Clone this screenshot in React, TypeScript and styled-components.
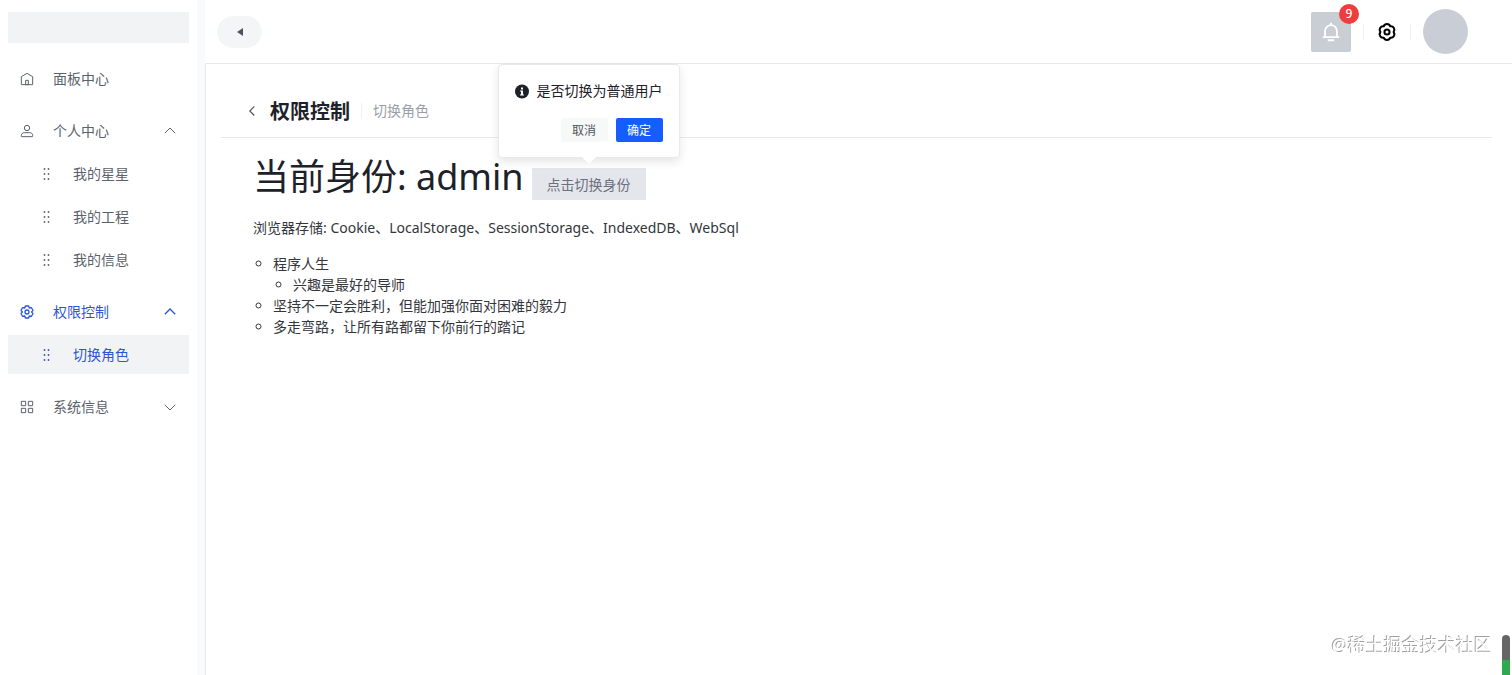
import React from "react";
import styled, { createGlobalStyle, css } from "styled-components";

const Global = createGlobalStyle`
  *, *::before, *::after { box-sizing: border-box; }
  body {
    margin: 0;
    background: #fff;
    color: #1d2129;
    font-family: "Noto Sans", "Noto Sans CJK SC", sans-serif;
    font-size: 14px;
  }
  button { font: inherit; border: 0; padding: 0; cursor: pointer; }
`;

const Layout = styled.div`
  display: grid;
  grid-template-columns: 205px minmax(0, 1fr);
  min-height: 100vh;
`;

const Sidebar = styled.aside`
  padding: 12px 8px;
  border-right: 8px solid #f9fafb;
`;

const Logo = styled.div`
  height: 31px;
  margin-bottom: 16px;
  background: #f2f3f5;
`;

const Menu = styled.nav`
  display: flex;
  flex-direction: column;
  gap: 13px;
`;

const Group = styled.div`
  display: flex;
  flex-direction: column;
  gap: 4px;
`;

const GroupHead = styled.button<{ $active?: boolean }>`
  display: flex;
  align-items: center;
  gap: 18px;
  height: 39px;
  padding: 0 11px;
  background: none;
  color: ${(p) => (p.$active ? "#2f55d4" : "#5c626c")};
  text-align: left;
`;

const Label = styled.span`
  flex: 1;
  padding-bottom: 2px;
`;

const SubLink = styled.a<{ $active?: boolean }>`
  display: flex;
  align-items: center;
  gap: 20px;
  height: 39px;
  padding: 0 12px 0 32px;
  color: #5c626c;
  text-decoration: none;
  ${(p) =>
    p.$active &&
    css`
      background: #f2f3f5;
      color: #2f55d4;
    `}
`;

const Column = styled.div`
  display: flex;
  flex-direction: column;
  min-width: 0;
`;

const TopBar = styled.header`
  display: flex;
  align-items: center;
  justify-content: space-between;
  height: 63px;
  padding: 0 44px 0 12px;
`;

const Collapse = styled.button`
  display: flex;
  align-items: center;
  justify-content: center;
  width: 45px;
  height: 32px;
  border-radius: 16px;
  background: #f4f5f6;
  color: #4e5560;
`;

const Tools = styled.div`
  display: flex;
  align-items: center;
  gap: 12px;
`;

const Bell = styled.button`
  position: relative;
  display: flex;
  align-items: center;
  justify-content: center;
  width: 40px;
  height: 40px;
  border-radius: 2px;
  background: #c9cdd4;
  color: #fff;
`;

const Count = styled.span`
  position: absolute;
  top: -8px;
  right: -8px;
  width: 20px;
  height: 20px;
  border-radius: 10px;
  background: #f03c3c;
  font-size: 12px;
  font-weight: 500;
  line-height: 20px;
`;

const Divider = styled.span`
  width: 1px;
  height: 16px;
  background: #f0f1f3;
`;

const IconButton = styled.button`
  display: flex;
  background: none;
  color: #000;
`;

const Avatar = styled.div`
  width: 45px;
  height: 45px;
  border-radius: 50%;
  background: #c9cdd6;
`;

const Panel = styled.main`
  flex: 1;
  padding: 0 20px 0 15px;
  border-top: 1px solid #e8e9ec;
  border-left: 1px solid #e8e9ec;
`;

const PageHead = styled.div`
  display: flex;
  align-items: center;
  gap: 11px;
  height: 74px;
  padding: 20px 24px 0;
  border-bottom: 1px solid #e8e9ec;
`;

const Back = styled.button`
  display: flex;
  background: none;
  color: #4e5560;
`;

const Title = styled.h1`
  margin: 0;
  padding-top: 2px;
  font-size: 20px;
  line-height: 28px;
  font-weight: 600;
`;

const Subtitle = styled.span`
  padding-bottom: 2px;
  color: #9aa0a9;
`;

const Content = styled.div`
  padding: 15px 32px;
`;

const Identity = styled.div`
  display: flex;
  align-items: baseline;
  gap: 8px;
`;

const Heading = styled.h2`
  margin: 0;
  font-size: 36px;
  line-height: 48px;
  font-weight: 400;
`;

const Anchor = styled.div`
  position: relative;
`;

const SwitchButton = styled.button`
  height: 32px;
  padding: 0 15px;
  background: #e5e6eb;
  color: #6b7080;
`;

const Popover = styled.div`
  position: absolute;
  bottom: calc(100% + 10px);
  left: 50%;
  display: flex;
  flex-direction: column;
  gap: 17px;
  width: 182px;
  padding: 16px 16px 15px;
  transform: translateX(-50%);
  border: 1px solid #e8e9ec;
  border-radius: 4px;
  background: #fff;
  box-shadow: 0 4px 10px rgba(0, 0, 0, 0.1);
  &::after {
    content: "";
    position: absolute;
    bottom: -5px;
    left: calc(50% - 5px);
    width: 10px;
    height: 10px;
    transform: rotate(45deg);
    background: #fff;
  }
`;

const Question = styled.div`
  display: flex;
  align-items: center;
  gap: 8px;
  line-height: 20px;
  white-space: nowrap;
`;

const Actions = styled.div`
  display: flex;
  justify-content: flex-end;
  gap: 8px;
`;

const SmallButton = styled.button<{ $primary?: boolean }>`
  width: 47px;
  height: 24px;
  border-radius: 2px;
  background: ${(p) => (p.$primary ? "#165dff" : "#f7f8f8")};
  color: ${(p) => (p.$primary ? "#fff" : "#4e5560")};
  font-size: 12px;
`;

const Storage = styled.p`
  margin: 16px 0 14px;
  color: #33363c;
  line-height: 22px;
`;

const List = styled.ul`
  margin: 0;
  padding-left: 20px;
  list-style: circle;
  color: #33363c;
  line-height: 21px;
`;

const Watermark = styled.div`
  position: fixed;
  right: 20px;
  bottom: 18px;
  color: #fff;
  font-size: 18px;
  line-height: 24px;
  text-shadow: -1px -1px 0 #a0a0a0;
`;

const ScrollMark = styled.div`
  position: fixed;
  right: 2px;
  bottom: 0;
  width: 8px;
  height: 40px;
  border-radius: 4px 4px 0 0;
  background: linear-gradient(#666 25px, #2fa84f 25px);
`;

const icons = {
  home: "M7 17 24 7l17 10v24H7V17ZM20 28h8v13h-8V28Z",
  user: "M7 37c0-4.97 4.03-8 9-8h16c4.97 0 9 3.03 9 8v3a1 1 0 0 1-1 1H8a1 1 0 0 1-1-1v-3ZM32 15a8 8 0 1 1-16 0 8 8 0 0 1 16 0Z",
  settings:
    "M18.797 6.732A1 1 0 0 1 19.76 6h8.48a1 1 0 0 1 .964.732l1.285 4.628a1 1 0 0 0 1.213.7l4.651-1.2a1 1 0 0 1 1.116.468l4.24 7.344a1 1 0 0 1-.153 1.2L38.193 23.3a1 1 0 0 0 0 1.402l3.364 3.427a1 1 0 0 1 .153 1.2l-4.24 7.344a1 1 0 0 1-1.116.468l-4.65-1.2a1 1 0 0 0-1.214.7l-1.285 4.628a1 1 0 0 1-.964.732h-8.48a1 1 0 0 1-.963-.732L17.51 36.64a1 1 0 0 0-1.213-.7l-4.65 1.2a1 1 0 0 1-1.116-.468l-4.24-7.344a1 1 0 0 1 .153-1.2L9.809 24.7a1 1 0 0 0 0-1.402l-3.364-3.427a1 1 0 0 1-.153-1.2l4.24-7.344a1 1 0 0 1 1.116-.468l4.65 1.2a1 1 0 0 0 1.213-.7l1.286-4.628ZM30 24a6 6 0 1 1-12 0 6 6 0 0 1 12 0Z",
  apps: "M7 7h13v13H7V7ZM28 7h13v13H28V7ZM7 28h13v13H7V28ZM28 28h13v13H28V28Z",
  up: "M39.6 30.557 24.043 15 8.487 30.557",
  down: "M39.6 17.443 24.043 33 8.487 17.443",
  left: "M32 8.4 16.444 23.956 32 39.513",
  bell: "M24 9c7.18 0 13 5.82 13 13v13H11V22c0-7.18 5.82-13 13-13Zm0 0V4M6 35h36m-25 7h14",
};

function Icon({ name, size = 16, weight = 3 }: { name: keyof typeof icons; size?: number; weight?: number }) {
  return (
    <svg width={size} height={size} viewBox="0 0 48 48" fill="none" stroke="currentColor" strokeWidth={weight} aria-hidden>
      <path d={icons[name]} />
    </svg>
  );
}

function Dots() {
  return (
    <svg width="13" height="14" viewBox="0 0 13 14" fill="currentColor" aria-hidden>
      {[2, 7, 12].map((y) => (
        <React.Fragment key={y}>
          <circle cx="4.5" cy={y} r="0.9" />
          <circle cx="8.5" cy={y} r="0.9" />
        </React.Fragment>
      ))}
    </svg>
  );
}

function Gear() {
  return (
    <svg width="22" height="22" viewBox="0 0 26 26" fill="none" stroke="currentColor" strokeWidth="2.4" strokeLinejoin="round" aria-hidden>
      <path d="M20.8 13A4.2 4.2 0 0 0 16.9 6.25A4.2 4.2 0 0 0 9.1 6.25A4.2 4.2 0 0 0 5.2 13A4.2 4.2 0 0 0 9.1 19.75A4.2 4.2 0 0 0 16.9 19.75A4.2 4.2 0 0 0 20.8 13Z" />
      <circle cx="13" cy="13" r="3" />
    </svg>
  );
}

type MenuGroup = {
  label: string;
  icon: keyof typeof icons;
  arrow?: "up" | "down";
  active?: boolean;
  items?: { label: string; active?: boolean }[];
};

const menu: MenuGroup[] = [
  { label: "面板中心", icon: "home" },
  { label: "个人中心", icon: "user", arrow: "up", items: [{ label: "我的星星" }, { label: "我的工程" }, { label: "我的信息" }] },
  { label: "权限控制", icon: "settings", arrow: "up", active: true, items: [{ label: "切换角色", active: true }] },
  { label: "系统信息", icon: "apps", arrow: "down" },
];

export default function App() {
  return (
    <>
      <Global />
      <Layout>
        <Sidebar>
          <Logo />
          <Menu>
            {menu.map((g) => (
              <Group key={g.label}>
                <GroupHead $active={g.active}>
                  <Icon name={g.icon} weight={g.active ? 4 : 3} />
                  <Label>{g.label}</Label>
                  {g.arrow && <Icon name={g.arrow} weight={g.active ? 4 : 3} />}
                </GroupHead>
                {g.items?.map((item) => (
                  <SubLink key={item.label} href="#" $active={item.active}>
                    <Dots />
                    <Label>{item.label}</Label>
                  </SubLink>
                ))}
              </Group>
            ))}
          </Menu>
        </Sidebar>
        <Column>
          <TopBar>
            <Collapse aria-label="收起菜单">
              <svg width="8" height="10" viewBox="0 0 8 10" fill="currentColor" aria-hidden>
                <path d="M1 5 7 1v8Z" />
              </svg>
            </Collapse>
            <Tools>
              <Bell aria-label="通知">
                <Icon name="bell" size={22} weight={4} />
                <Count>9</Count>
              </Bell>
              <Divider />
              <IconButton aria-label="设置">
                <Gear />
              </IconButton>
              <Divider />
              <Avatar />
            </Tools>
          </TopBar>
          <Panel>
            <PageHead>
              <Back aria-label="返回">
                <Icon name="left" size={14} weight={4} />
              </Back>
              <Title>权限控制</Title>
              <Divider />
              <Subtitle>切换角色</Subtitle>
            </PageHead>
            <Content>
              <Identity>
                <Heading>当前身份: admin</Heading>
                <Anchor>
                  <SwitchButton>点击切换身份</SwitchButton>
                  <Popover role="dialog" aria-label="是否切换为普通用户">
                    <Question>
                      <svg width="15" height="15" viewBox="0 0 14 14" aria-hidden>
                        <circle cx="7" cy="7" r="7" fill="#1d2129" />
                        <path d="M6 3h2v2H6ZM5 6h3v4h1v1H5v-1h1V7H5Z" fill="#fff" />
                      </svg>
                      是否切换为普通用户
                    </Question>
                    <Actions>
                      <SmallButton>取消</SmallButton>
                      <SmallButton $primary>确定</SmallButton>
                    </Actions>
                  </Popover>
                </Anchor>
              </Identity>
              <Storage>浏览器存储: Cookie、LocalStorage、SessionStorage、IndexedDB、WebSql</Storage>
              <List>
                <li>
                  程序人生
                  <List>
                    <li>兴趣是最好的导师</li>
                  </List>
                </li>
                <li>坚持不一定会胜利，但能加强你面对困难的毅力</li>
                <li>多走弯路，让所有路都留下你前行的踏记</li>
              </List>
            </Content>
          </Panel>
        </Column>
      </Layout>
      <Watermark>@稀土掘金技术社区</Watermark>
      <ScrollMark />
    </>
  );
}
